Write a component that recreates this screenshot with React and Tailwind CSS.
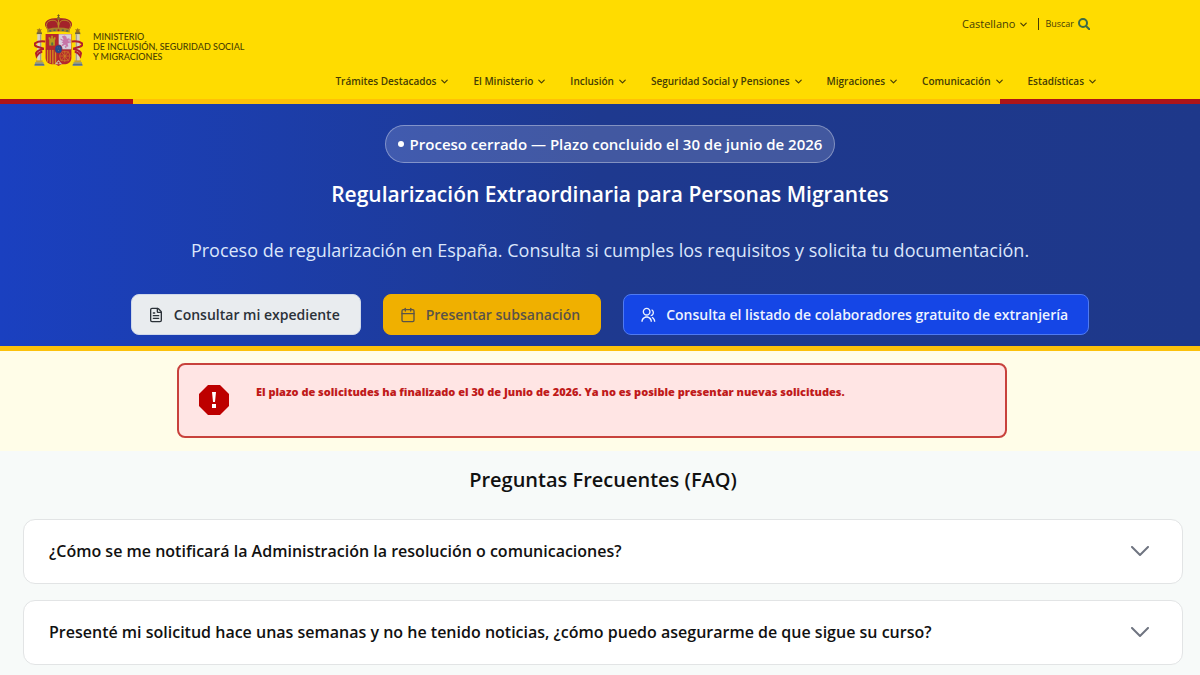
import { Calendar, ChevronDown, FileText } from 'lucide-react';
import { RiGroupLine } from 'react-icons/ri';

const NAV_ITEMS = [
  'Trámites Destacados',
  'El Ministerio',
  'Inclusión',
  'Seguridad Social y Pensiones',
  'Migraciones',
  'Comunicación',
  'Estadísticas',
];

const QUESTIONS = [
  '¿Cómo se me notificará la Administración la resolución o comunicaciones?',
  'Presenté mi solicitud hace unas semanas y no he tenido noticias, ¿cómo puedo asegurarme de que sigue su curso?',
];

function Pillar({ flip }) {
  return (
    <g transform={flip ? 'translate(232 0) scale(-1 1)' : undefined}>
      <path d="M51 84h14l-2-8 3-5-5 2-3-5-3 5-5-2 3 5z" fill="#a0741c" />
      <rect x="50" y="82" width="16" height="5" fill="#6f6440" />
      <path d="M52 87h12v81H52z" fill="#d9d3c4" />
      <path d="M60 87h4v81h-4z" fill="#a9a295" />
      <rect x="48" y="166" width="20" height="6" fill="#c9a22a" />
      <path d="M45 172h26v4l3 7H43l2-7z" fill="#8d9488" />
      <path d="M44 179h29" stroke="#4e6c86" strokeWidth="3" />
      <path
        d="M76 109c-12-2-24 0-32 6-1 5 2 8 8 10l20 6M72 131c-9 2-20 5-24 13l2 9c4-7 10-12 17-14"
        fill="none"
        stroke="#b3202a"
        strokeWidth="6"
      />
    </g>
  );
}

function Crest() {
  return (
    <svg viewBox="42 27 148 158" className="h-[53px] w-[49px] shrink-0" role="img" aria-label="Escudo de España">
      <Pillar />
      <Pillar flip />

      {/* corona */}
      <path d="M76 62c-4-14 8-24 40-24s44 10 40 24l-8 14H84z" fill="#a3222a" />
      <path
        d="M84 73c-12-18 2-30 18-28 8 1 14 7 14 28 0-21 6-27 14-28 16-2 30 10 18 28M116 40v34"
        fill="none"
        stroke="#b98a26"
        strokeWidth="3"
      />
      <path d="M82 71q34-9 68 0v11q-34-7-68 0z" fill="#a9812a" />
      <path d="M88 77h6M101 75h6M126 75h6M139 77h6" stroke="#3f6a58" strokeWidth="4" />
      <circle cx="116" cy="75" r="3" fill="#a3222a" />
      <circle cx="116" cy="39" r="5" fill="#8a6b24" />
      <path d="M116 27v11M112 31h8" stroke="#7a5d20" strokeWidth="3" />

      {/* escudo */}
      <path d="M77 86h78v72c0 14-11 20-22 20h-8l-9 5-9-5h-8c-11 0-22-6-22-20z" fill="#b5282d" />
      <path d="M116 87h38v46h-38z" fill="#d8cfdc" />
      <path d="M88 121v-18h-2v-7h5v4h3v-8h5v8h3v-4h5v7h-2v18z" fill="#b99b1f" />
      <path d="M94 121v-8q3-4 6 0v8z" fill="#5b7042" />
      <path
        d="M126 94l8-3 6 4 1 6 8-2-3 8 3 6-6 2 3 8-6 3-4-8-8 5-3-3 6-6-6-2 5-4-5-4 7-1z"
        fill="#c775a7"
      />
      <path d="M149 101c5 4 0 8 2 13M122 102l5 3M136 123l3 6" stroke="#b9609b" strokeWidth="3" fill="none" />
      <path d="M83 134v36M91 134v41M99 134v43M107 134v43" stroke="#d5901f" strokeWidth="4" />
      <path
        d="M124 140l22 27M146 140l-22 27M121 153h29M135 137v34M124 140h22l5 13-5 14h-22l-5-14z"
        fill="none"
        stroke="#cf8a25"
        strokeWidth="2"
      />
      <path d="M77 133h78M116 87v91" stroke="#8c2730" strokeWidth="1" />
      <path d="M105 178h22l-11-13z" fill="#c9bfa9" />
      <circle cx="116" cy="173" r="3" fill="#b5282d" />
      <ellipse cx="116" cy="132" rx="12" ry="14" fill="#a52a3a" />
      <ellipse cx="116" cy="132" rx="10" ry="12" fill="#244a8c" />
      <path d="M112 128h1M119 128h1M115 136h2" stroke="#8d9264" strokeWidth="3" />
    </svg>
  );
}

function Header() {
  return (
    <header className="bg-[#ffdc00]">
      <div className="flex h-[99px] justify-between pl-[34px]">
        <a href="#inicio" className="mt-[14px] flex items-start gap-[10px]">
          <Crest />
          <span className="mt-[18px] font-['Lato'] text-[9px] leading-[10px] font-medium text-[#4a4100]">
            MINISTERIO
            <br />
            DE INCLUSIÓN, SEGURIDAD SOCIAL
            <br />Y MIGRACIONES
          </span>
        </a>
        <div className="flex flex-col items-end justify-between pt-4 pb-[10px] text-[#453c05]">
          <div className="flex items-center pr-[110px] text-[11px] leading-4">
            <button type="button" className="flex items-center gap-[3px]">
              Castellano
              <ChevronDown size={11} strokeWidth={2.5} />
            </button>
            <span className="ml-[9px] h-3 w-px bg-[#453c05]" />
            <button type="button" className="ml-[6px] flex items-center gap-1 text-[9px]">
              Buscar
              <svg viewBox="0 0 12 12" className="size-3 text-[#3d6b46]" fill="none" stroke="currentColor" strokeWidth="2">
                <circle cx="5" cy="5" r="4" />
                <path d="M8 8l4 4" />
              </svg>
            </button>
          </div>
          <nav className="flex gap-[23px] pr-[102px] text-[10px] leading-4 font-semibold">
            {NAV_ITEMS.map((item) => (
              <button key={item} type="button" className="flex items-center gap-[3px] whitespace-nowrap">
                {item}
                <ChevronDown size={11} strokeWidth={2.5} />
              </button>
            ))}
          </nav>
        </div>
      </div>
      <div className="flex h-[5px] bg-[#ffc107]">
        <div className="w-1/9 bg-[#ad1519]" />
        <div className="ml-auto w-1/6 bg-[#ad1519]" />
      </div>
    </header>
  );
}

function Hero() {
  return (
    <section className="flex flex-col items-center border-b-[5px] border-[#fcc10b] bg-linear-to-r from-[#1a40c0] via-[#1e398f] via-50% to-[#1e388a] pt-[21px] pb-[11px] pl-5 text-white">
      <p className="flex items-center gap-[6px] rounded-full border border-white/35 bg-white/16 px-3 py-[7px] text-[15px] leading-[22px] font-semibold">
        <span className="size-[6px] rounded-full bg-white" />
        Proceso cerrado — Plazo concluido el 30 de junio de 2026
      </p>
      <h1 className="mt-[15px] text-[21px] leading-8 font-semibold">
        Regularización Extraordinaria para Personas Migrantes
      </h1>
      <p className="mt-[26px] text-[18px] leading-7 text-[#dbe6fb]">
        Proceso de regularización en España. Consulta si cumples los requisitos y solicita tu documentación.
      </p>
      <div className="mt-[30px] flex gap-[22px] text-[14px] leading-[23px] font-semibold">
        <a
          href="#expediente"
          className="flex items-center gap-[10px] rounded-lg border border-[#cfd8ea] bg-[#e9ecef] py-2 pr-5 pl-4 text-[#2b3138]"
        >
          <FileText size={16} />
          Consultar mi expediente
        </a>
        <a
          href="#subsanacion"
          className="flex items-center gap-[10px] rounded-lg border border-[#f0b000] bg-[#f0b000] py-2 pr-5 pl-4 text-[#5a5348]"
        >
          <Calendar size={16} />
          Presentar subsanación
        </a>
        <a
          href="#colaboradores"
          className="flex items-center gap-[10px] rounded-lg border border-[#4f7af2] bg-[#1546e6] py-2 pr-5 pl-4 text-[#eef3ff]"
        >
          <RiGroupLine size={16} />
          Consulta el listado de colaboradores gratuito de extranjería
        </a>
      </div>
    </section>
  );
}

function ClosedNotice() {
  return (
    <section className="bg-[#fffde8] pt-3 pr-[193px] pb-[13px] pl-[177px]">
      <div
        role="alert"
        className="flex h-[75px] gap-[27px] rounded-lg border-2 border-[#c8423c] bg-[#ffe5e4] px-5 pt-5"
      >
        <svg viewBox="0 0 30 30" className="size-[30px] shrink-0" aria-hidden="true">
          <path d="M9 0h12l9 9v12l-9 9H9l-9-9V9z" fill="#bd0000" />
          <path d="M13 7h4l-1 10h-2zM13 19h4v4h-4z" fill="#fff" />
        </svg>
        <p className="text-[11px] leading-[14px] font-extrabold text-[#c01a1a]">
          El plazo de solicitudes ha finalizado el 30 de Junio de 2026. Ya no es posible presentar nuevas solicitudes.
        </p>
      </div>
    </section>
  );
}

function Faq() {
  return (
    <section className="pt-[13px] pr-[17px] pb-[11px] pl-[23px]">
      <h2 className="text-center text-[20px] leading-8 font-semibold text-[#111]">Preguntas Frecuentes (FAQ)</h2>
      <div className="mt-[23px] flex flex-col gap-4">
        {QUESTIONS.map((question) => (
          <button
            key={question}
            type="button"
            className="flex items-center justify-between rounded-xl border border-[#e2e4e5] bg-white py-5 pr-8 pl-[25px] text-left text-[16px] leading-[23px] font-semibold text-[#111]"
          >
            {question}
            <svg viewBox="0 0 20 12" className="h-3 w-5 shrink-0" fill="none" stroke="#6f7480" strokeWidth="2">
              <path d="M2 1l8 8 8-8" strokeLinecap="round" strokeLinejoin="round" />
            </svg>
          </button>
        ))}
      </div>
    </section>
  );
}

export default function App() {
  return (
    <div className="min-h-screen bg-[#f7faf9] font-['Open_Sans','Noto_Sans',sans-serif]">
      <Header />
      <main>
        <Hero />
        <ClosedNotice />
        <Faq />
      </main>
    </div>
  );
}
